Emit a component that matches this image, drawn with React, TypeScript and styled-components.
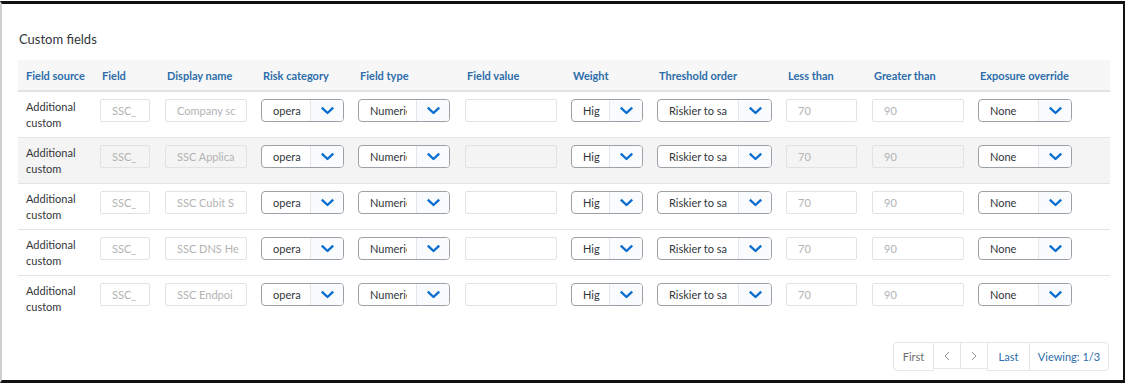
import React from "react";
import styled, { createGlobalStyle } from "styled-components";

const Global = createGlobalStyle`
  html, body { margin: 0; padding: 0; background: #ffffff; }
  body { font-family: "Lato", "Liberation Sans", sans-serif; }
  * { box-sizing: border-box; }
`;

const COLS = "74px 65px 96px 97px 107px 106px 86px 129px 86px 106px 140px";

const Frame = styled.div`
  margin-top: 1px;
  width: 1125px;
  height: 382px;
  border-top: 3px solid #111111;
  border-right: 2px solid #111111;
  border-bottom: 3px solid #111111;
  border-left: 2px solid #cfcfcf;
  padding: 26px 13px 0 16px;
  display: flex;
  flex-direction: column;
`;

const Title = styled.h2`
  margin: 0 0 0 1px;
  font-size: 13px;
  line-height: 18px;
  font-weight: 400;
  color: #32363a;
`;

const Table = styled.div`
  margin-top: 12px;
  display: flex;
  flex-direction: column;
`;

const HeaderRow = styled.div`
  display: grid;
  grid-template-columns: ${COLS};
  height: 32px;
  background: #f7f7f7;
  border-bottom: 2px solid #e2e2e2;
  align-items: center;
`;

const HeaderCell = styled.div`
  padding-left: 10px;
  font-size: 11px;
  font-weight: 700;
  color: #2d6daa;
  white-space: nowrap;
  &:first-child { padding-left: 8px; }
`;

const Row = styled.div<{ $shaded?: boolean; $last?: boolean }>`
  display: grid;
  grid-template-columns: ${COLS};
  height: 46px;
  padding-top: 7px;
  align-items: start;
  background: ${(p) => (p.$shaded ? "#f4f4f4" : "transparent")};
  border-bottom: ${(p) => (p.$last ? "none" : "1px solid #e4e4e4")};
`;

const Cell = styled.div`
  padding-left: 8px;
  font-size: 11px;
  line-height: 16px;
  color: #32363a;
`;

const SourceText = styled.div`
  width: 56px;
`;

const TextInput = styled.div<{ $w: number }>`
  width: ${(p) => p.$w}px;
  height: 23px;
  border: 1px solid #e2e2e2;
  border-radius: 2px;
  padding-left: 11px;
  padding-right: 4px;
  font-size: 11px;
  line-height: 21px;
  color: #b3b3b3;
  white-space: nowrap;
  overflow: hidden;
`;

const Select = styled.div<{ $w: number }>`
  width: ${(p) => p.$w}px;
  height: 23px;
  border: 1px solid #9ba1a7;
  border-radius: 4px;
  background: #ffffff;
  display: flex;
  overflow: hidden;
`;

const SelectValue = styled.div`
  flex: 1;
  min-width: 0;
  padding-left: 11px;
  padding-right: 9px;
  font-size: 11px;
  line-height: 21px;
  color: #32363a;
  white-space: nowrap;
  overflow: hidden;
`;

const ValueClip = styled.div`
  overflow: hidden;
`;

const SelectArrow = styled.div`
  width: 33px;
  flex: none;
  border-left: 1px solid #e3e5e8;
  background: #fafbfc;
  display: flex;
  align-items: center;
  justify-content: center;
`;

const Chevron = () => (
  <svg width="15" height="9" viewBox="0 0 15 9">
    <path d="M1.8 1.6 L7.5 7 L13.2 1.6" fill="none" stroke="#0a6ed1" strokeWidth="2.4" strokeLinejoin="round" />
  </svg>
);

const Dropdown = ({ w, value }: { w: number; value: string }) => (
  <Select $w={w}>
    <SelectValue>
      <ValueClip>{value}</ValueClip>
    </SelectValue>
    <SelectArrow>
      <Chevron />
    </SelectArrow>
  </Select>
);

const Footer = styled.div`
  margin-top: 20px;
  display: flex;
  justify-content: flex-end;
  padding-right: 1px;
`;

const Pager = styled.div`
  display: flex;
  align-items: flex-start;
`;

const PageButton = styled.div<{ $w: number; $tone: "gray" | "light" | "blue"; $short?: boolean }>`
  width: ${(p) => p.$w}px;
  height: ${(p) => (p.$short ? 27 : 29)}px;
  margin-left: -1px;
  border: 1px solid #e6e6e6;
  display: flex;
  align-items: center;
  justify-content: center;
  font-size: 11px;
  color: ${(p) => (p.$tone === "blue" ? "#2d6daa" : p.$tone === "gray" ? "#6a6d70" : "#8d9094")};
  &:first-child { border-radius: 4px 0 0 4px; margin-left: 0; }
  &:last-child { border-radius: 0 4px 4px 0; }
`;

const PagerArrow = ({ dir }: { dir: "left" | "right" }) => (
  <svg width="6" height="10" viewBox="0 0 6 10">
    <path
      d={dir === "left" ? "M5 1 L1 5 L5 9" : "M1 1 L5 5 L1 9"}
      fill="none"
      stroke="#8d9094"
      strokeWidth="1"
    />
  </svg>
);

const names = ["Company sc", "SSC Applica", "SSC Cubit S", "SSC DNS He", "SSC Endpoi"];

export default function App() {
  const headers = [
    "Field source",
    "Field",
    "Display name",
    "Risk category",
    "Field type",
    "Field value",
    "Weight",
    "Threshold order",
    "Less than",
    "Greater than",
    "Exposure override",
  ];
  return (
    <>
      <Global />
      <Frame>
        <Title>Custom fields</Title>
        <Table>
          <HeaderRow>
            {headers.map((h) => (
              <HeaderCell key={h}>{h}</HeaderCell>
            ))}
          </HeaderRow>
          {names.map((n, i) => (
            <Row key={n} $shaded={i === 1} $last={i === names.length - 1}>
              <Cell>
                <SourceText>Additional custom</SourceText>
              </Cell>
              <Cell>
                <TextInput $w={50}>SSC_</TextInput>
              </Cell>
              <Cell>
                <TextInput $w={82}>{n}</TextInput>
              </Cell>
              <Cell>
                <Dropdown w={83} value="opera" />
              </Cell>
              <Cell>
                <Dropdown w={92} value="Numeric" />
              </Cell>
              <Cell>
                <TextInput $w={92}></TextInput>
              </Cell>
              <Cell>
                <Dropdown w={72} value="Hig" />
              </Cell>
              <Cell>
                <Dropdown w={115} value="Riskier to sa" />
              </Cell>
              <Cell>
                <TextInput $w={71}>70</TextInput>
              </Cell>
              <Cell>
                <TextInput $w={92}>90</TextInput>
              </Cell>
              <Cell>
                <Dropdown w={94} value="None" />
              </Cell>
            </Row>
          ))}
        </Table>
        <Footer>
          <Pager>
            <PageButton $w={41} $tone="gray">First</PageButton>
            <PageButton $w={28} $tone="light" $short>
              <PagerArrow dir="left" />
            </PageButton>
            <PageButton $w={28} $tone="light" $short>
              <PagerArrow dir="right" />
            </PageButton>
            <PageButton $w={43} $tone="blue">Last</PageButton>
            <PageButton $w={80} $tone="blue">Viewing: 1/3</PageButton>
          </Pager>
        </Footer>
      </Frame>
    </>
  );
}
